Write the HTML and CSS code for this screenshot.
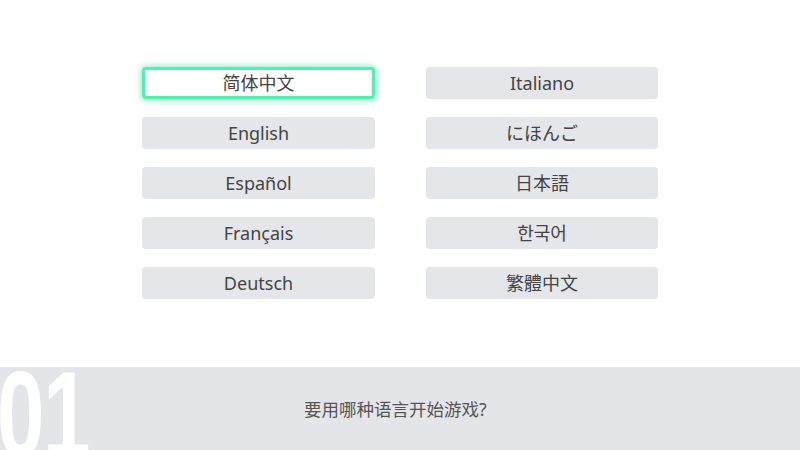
FILE: index.html
```html
<!DOCTYPE html>
<html lang="zh-CN">
<head>
    <meta charset="UTF-8">
    <title>语言选择</title>
    <link rel="stylesheet" href="styles.css">
</head>
<body>
<div class="langs">
    <div class="btn current">简体中文</div>
    <div class="btn">Italiano</div>
    <div class="btn">English</div>
    <div class="btn" lang="ja">にほんご</div>
    <div class="btn">Español</div>
    <div class="btn" lang="ja">日本語</div>
    <div class="btn">Français</div>
    <div class="btn" lang="ko">한국어</div>
    <div class="btn">Deutsch</div>
    <div class="btn" lang="zh-TW">繁體中文</div>
</div>

<div class="bar">
    <div class="num"><span>01</span></div>
    <div class="prompt">要用哪种语言开始游戏?</div>
</div>
</body>
</html>
```

FILE: styles.css
```css
* {
    padding: 0;
    margin: 0;
    box-sizing: border-box;
}

body {
    width: 800px;
    height: 450px;
    overflow: hidden;
    background: #fff;
    font-family: "Noto Sans", "Noto Sans CJK SC", sans-serif;
    color: #444;
}

.langs {
    display: grid;
    grid-template-columns: 233px 232px;
    grid-auto-rows: 32px;
    column-gap: 51px;
    row-gap: 18px;
    justify-content: center;
    padding-top: 67px;
}

.btn {
    display: flex;
    align-items: center;
    justify-content: center;
    padding-bottom: 1px;
    background: #e4e6e9;
    border-radius: 4px;
    font-size: 18px;
    line-height: 1;
}

.btn[lang="ja"] {
    font-family: "Noto Sans", "Noto Sans CJK JP", sans-serif;
}

.btn[lang="ko"] {
    font-family: "Noto Sans", "Noto Sans CJK KR", sans-serif;
}

.btn[lang="zh-TW"] {
    font-family: "Noto Sans", "Noto Sans CJK TC", sans-serif;
}

.btn.current {
    background: #fff;
    border: 3px solid #52f0ac;
    box-shadow: 0 0 6px 1px #7cf5c4;
}

.bar {
    display: flex;
    align-items: center;
    height: 83px;
    margin-top: 68px;
    background: #e3e5e8;
    overflow: hidden;
}

.num {
    flex: none;
    width: 92px;
    height: 83px;
    overflow: hidden;
}

.num span {
    display: block;
    font-family: "Liberation Sans", sans-serif;
    font-weight: bold;
    font-size: 122px;
    line-height: 96px;
    letter-spacing: -2px;
    color: #fff;
    transform: scaleX(0.7);
    transform-origin: left top;
    margin-left: -3px;
}

.prompt {
    padding-left: 212px;
    font-size: 17.5px;
    color: #555;
}
```
